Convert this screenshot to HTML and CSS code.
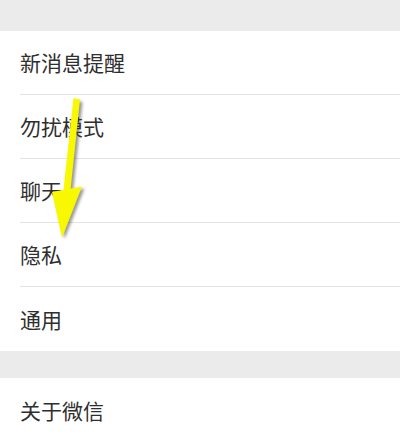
FILE: index.html
```html
<!DOCTYPE html>
<html lang="zh-CN">
<head>
<meta charset="utf-8">
<link rel="stylesheet" href="styles.css">
</head>
<body>
<div class="page">
  <div class="gap gap-top"></div>
  <div class="group">
    <div class="row"><span class="label">新消息提醒</span></div>
    <div class="row"><span class="label">勿扰模式</span></div>
    <div class="row"><span class="label">聊天</span></div>
    <div class="row"><span class="label">隐私</span></div>
    <div class="row row-last"><span class="label">通用</span></div>
  </div>
  <div class="gap gap-mid"></div>
  <div class="group">
    <div class="row row-last"><span class="label">关于微信</span></div>
  </div>
  <svg class="arrow" width="400" height="434" viewBox="0 0 400 434">
    <defs>
      <filter id="sh" x="-50%" y="-50%" width="200%" height="200%">
        <feGaussianBlur stdDeviation="1.5"/>
      </filter>
    </defs>
    <g transform="translate(2.5,2)" fill="#333" opacity="0.5" filter="url(#sh)">
      <polygon points="73.5,99 80,100 70.5,190 63.5,190"/>
      <polygon points="52,192 82,186.5 62,237"/>
    </g>
    <polygon points="73.5,98 80,99.5 70.5,190 63.5,190" fill="#f8f800"/>
    <polygon points="52,192 82,186.5 62,238" fill="#f8f800"/>
  </svg>
</div>
</body>
</html>
```
FILE: styles.css
```css
* { box-sizing: border-box; }
html, body { margin: 0; padding: 0; background: #fff; }
.page {
  position: relative;
  width: 400px;
  height: 434px;
  overflow: hidden;
  font-family: "Noto Sans CJK SC", "Noto Sans", sans-serif;
  background: #fff;
}
.gap { background: #ebebeb; }
.gap-top { height: 31px; }
.gap-mid { height: 27px; }
.group { background: #fff; padding-left: 20px; }
.row {
  height: 64px;
  display: flex;
  align-items: center;
  border-bottom: 1px solid #e3e3e3;
}
.row-last { border-bottom: none; }
.label {
  font-size: 21px;
  color: #2e2e2e;
  margin-top: -1px;
}
.arrow { position: absolute; left: 0; top: 0; }
```
